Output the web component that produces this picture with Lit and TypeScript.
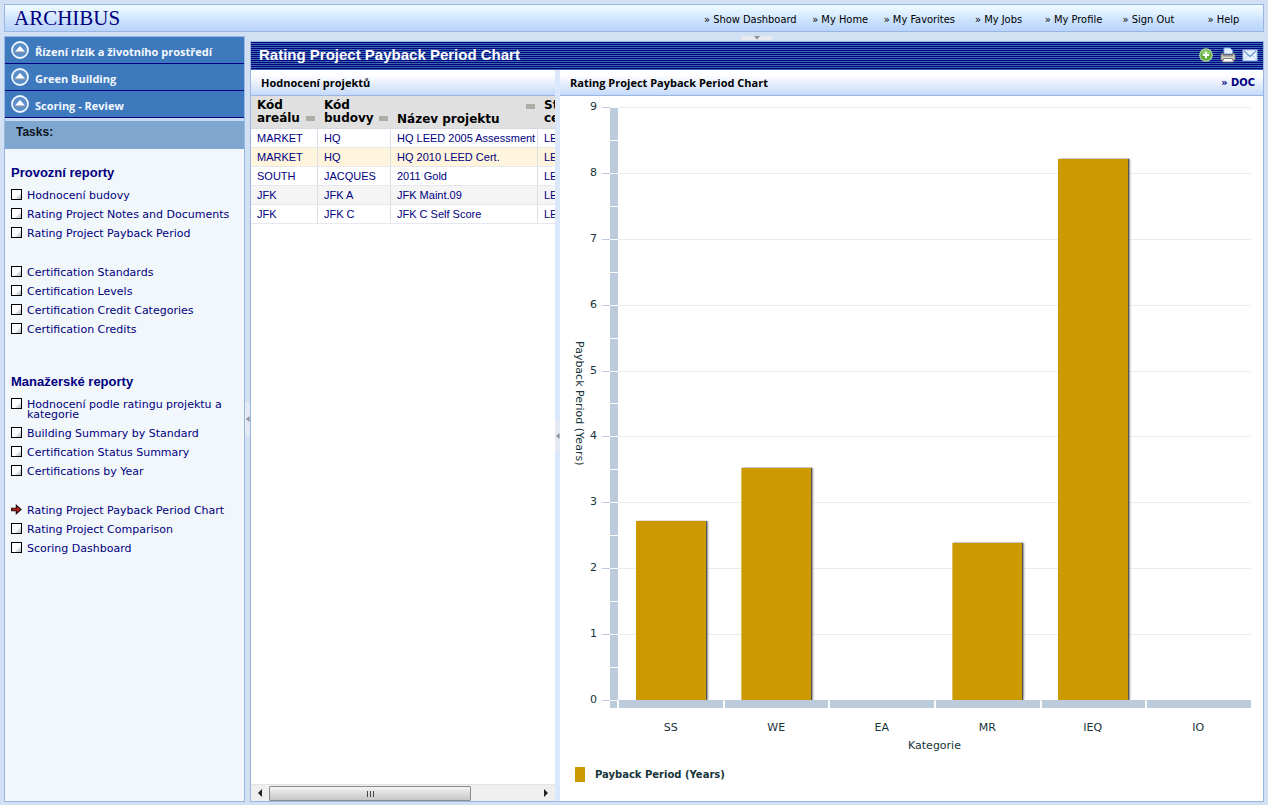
import { LitElement, html, svg, css, nothing } from "lit";
import { customElement } from "lit/decorators.js";
import { classMap } from "lit/directives/class-map.js";
import { styleMap } from "lit/directives/style-map.js";

interface Task {
  label: string;
  active?: boolean;
}

const NAV = ["Show Dashboard", "My Home", "My Favorites", "My Jobs", "My Profile", "Sign Out", "Help"];
const CRUMBS = ["Řízení rizik a životního prostředí", "Green Building", "Scoring - Review"];

const SECTIONS: { title: string; groups: Task[][] }[] = [
  {
    title: "Provozní reporty",
    groups: [
      [
        { label: "Hodnocení budovy" },
        { label: "Rating Project Notes and Documents" },
        { label: "Rating Project Payback Period" },
      ],
      [
        { label: "Certification Standards" },
        { label: "Certification Levels" },
        { label: "Certification Credit Categories" },
        { label: "Certification Credits" },
      ],
    ],
  },
  {
    title: "Manažerské reporty",
    groups: [
      [
        { label: "Hodnocení podle ratingu projektu a kategorie" },
        { label: "Building Summary by Standard" },
        { label: "Certification Status Summary" },
        { label: "Certifications by Year" },
      ],
      [
        { label: "Rating Project Payback Period Chart", active: true },
        { label: "Rating Project Comparison" },
        { label: "Scoring Dashboard" },
      ],
    ],
  },
];

const ROWS = [
  ["MARKET", "HQ", "HQ LEED 2005 Assessment", "LEED"],
  ["MARKET", "HQ", "HQ 2010 LEED Cert.", "LEED"],
  ["SOUTH", "JACQUES", "2011 Gold", "LEED"],
  ["JFK", "JFK A", "JFK Maint.09", "LEED"],
  ["JFK", "JFK C", "JFK C Self Score", "LEED"],
];
const SELECTED_ROW = 1;

const MAX = 9;
const DATA = [
  { name: "SS", value: 2.71 },
  { name: "WE", value: 3.52 },
  { name: "EA", value: 0 },
  { name: "MR", value: 2.39 },
  { name: "IEQ", value: 8.21 },
  { name: "IO", value: 0 },
];
const STEPS = Array.from({ length: MAX + 1 }, (_, i) => MAX - i);

const boxIcon = svg`<svg class="bullet" viewBox="0 0 11 11" width="11" height="11" aria-hidden="true">
  <rect x=".5" y=".5" width="10" height="10" fill="#fff" stroke="#000"/>
  <path d="M10 4v6H4z" fill="#dcdee3"/><path d="M10 6.500V10H6.500z" fill="#c3c6cc"/></svg>`;
const arrowIcon = svg`<svg class="bullet" viewBox="0 0 11 11" width="11" height="11" aria-hidden="true">
  <path d="M.7 4.200h4.600V1.300L10 5.500 5.300 9.700V6.800H.7z" fill="#c8231c" stroke="#1b0505" stroke-width="1.100"/></svg>`;
const upIcon = svg`<svg viewBox="0 0 18 18" width="18" height="18" aria-hidden="true">
  <circle cx="9" cy="9" r="8" fill="#5b8fca" stroke="#eef6ff" stroke-width="1.800"/>
  <path d="M9 5l5 5.500H4z" fill="#fff"/><path d="M4 11.500h10" stroke="#8b8fa8"/></svg>`;
const addIcon = svg`<svg viewBox="0 0 16 16" width="16" height="16" aria-hidden="true">
  <circle cx="8" cy="8" r="6.200" fill="#5fae3c" stroke="#b9dda6" stroke-width="1.200"/>
  <path d="M3.500 7a4.600 4.600 0 0 1 9 0z" fill="#8fcf70"/>
  <path d="M8 4.800v6.400M4.800 8h6.400" stroke="#fff" stroke-width="2"/></svg>`;
const printIcon = svg`<svg viewBox="0 0 16 16" width="16" height="16" aria-hidden="true">
  <path d="M4 7V1h6l2.500 2.500V7z" fill="#e4f0ff" stroke="#7fa8dc"/>
  <path d="M1 8.500Q1 6 3 6v2h10V6q2 0 2 2.500V13H1z" fill="#d9d9d4" stroke="#77756f"/>
  <path d="M2.500 9h11" stroke="#8a8378"/><path d="M3.500 11.500h9l1 3.500h-11z" fill="#fff" stroke="#7e7e7e"/></svg>`;
const mailIcon = svg`<svg viewBox="0 0 16 16" width="16" height="16" aria-hidden="true">
  <rect x="1" y="3" width="14" height="10.500" fill="#eaf3ff" stroke="#a9c8ee"/>
  <path d="M1.500 13l4.700-5M14.500 13L9.800 8" stroke="#b7cfee" fill="none"/>
  <path d="M2 4l6 5.500L14 4" stroke="#6f9bd2" fill="none" stroke-width="1.300"/></svg>`;
const leftTri = svg`<svg viewBox="0 0 4 8" width="4" height="8" aria-hidden="true"><path d="M3.500 1v6L0 4z" fill="#8a9099"/></svg>`;
const downTri = svg`<svg viewBox="0 0 8 4" width="8" height="4" aria-hidden="true"><path d="M1 0h6L4 3.500z" fill="#8a9099"/></svg>`;

@customElement("app-root")
export class AppRoot extends LitElement {
  static styles = css`
    :host {
      display: flex;
      flex-direction: column;
      gap: 4px;
      box-sizing: border-box;
      min-height: 100vh;
      padding: 4px 4px 3px;
      background: #d2e0f3;
      color: #000;
      --navy: #000080;
      --line: #99b6e3;
      --verdana: "DejaVu Sans", sans-serif;
      --tahoma: "DejaVu Sans Condensed", "DejaVu Sans", sans-serif;
      --arial: "Liberation Sans", sans-serif;
      --label: "Open Sans", sans-serif;
      font: 11px/14px var(--verdana);
    }
    * { box-sizing: border-box; }
    a { color: inherit; text-decoration: none; }
    button { border: 0; padding: 0; margin: 0; background: none; font: inherit; color: inherit; display: block; }
    svg { display: block; flex: none; }
    ul { list-style: none; margin: 0; padding: 0; }
    h1, h2, h3 { margin: 0; }

    .top {
      display: flex;
      align-items: center;
      justify-content: space-between;
      height: 28px;
      padding: 0 2px 0 9px;
      border: 1px solid var(--line);
      background: linear-gradient(#f2fcff 0, #d9ecff 40%, #cbe1fd 60%, #b9d4fb 100%);
    }
    .brand { font: 21px/24px "Liberation Serif", serif; color: var(--navy); }
    .nav { display: flex; padding-top: 3px; font: 11px/14px var(--tahoma); }
    .nav a { min-width: 75px; padding: 0 6px; text-align: center; white-space: nowrap; }

    .body { display: flex; flex: 1; }
    .side { width: 241px; flex: none; border: 1px solid var(--line); background: #f2f7fb; }
    .crumb {
      display: flex;
      align-items: center;
      gap: 6px;
      height: 27px;
      padding-left: 6px;
      border-bottom: 1px solid var(--navy);
      background: #3e78bd;
      color: #f2f9ff;
      font: 700 11px/16px var(--label);
    }
    .crumb span { padding-top: 3px; }
    .tasks {
      height: 31px;
      padding: 4px 11px;
      border-top: 3px solid #c5dbf3;
      background: #7fa6cf;
      color: #0b1420;
      font: 700 12px/14px var(--arial);
    }
    .section { padding: 16px 6px 19px; color: var(--navy); }
    .section + .section { padding-top: 16px; }
    .section h2 { font: 700 13px/16px var(--arial); padding-bottom: 5px; }
    .group + .group { padding-top: 20px; }
    .group a { display: flex; gap: 5px; padding: 5px 0 4px; line-height: 10px; }
    .bullet { margin-top: -2px; margin-bottom: 1px; }

    .split { width: 5px; flex: none; display: flex; align-items: center; background: #dbe8fb; }
    .split button { width: 5px; height: 34px; display: flex; align-items: center; justify-content: center; background: #e4e9f3; border-radius: 2px; }
    .outer { background: #d2e0f3; }

    .main { flex: 1; min-width: 0; display: flex; flex-direction: column; }
    .strip { height: 5px; display: flex; justify-content: center; }
    .strip button { width: 32px; height: 4px; display: flex; justify-content: center; background: #e6e9ee; border-radius: 2px; }
    .frame { flex: 1; display: flex; flex-direction: column; border: 1px solid var(--line); background: #fff; }
    .title {
      display: flex;
      align-items: center;
      justify-content: space-between;
      height: 28px;
      padding: 0 5px 2px 8px;
      background: repeating-linear-gradient(#000080 0 1px, #3a68ae 1px 2px);
      color: #fff;
    }
    .title h1 { font: 700 15px/20px var(--arial); }
    .tools { display: flex; gap: 6px; }
    .panels { flex: 1; display: flex; min-height: 0; }
    .head {
      display: flex;
      align-items: center;
      justify-content: space-between;
      height: 26px;
      padding: 0 8px 0 10px;
      border-bottom: 1px solid var(--line);
      background: linear-gradient(#fff 20%, #dfe9fb 65%, #c5dafb);
      font: 700 11px/16px var(--label);
    }
    .head h2 { font: inherit; }
    .doc { color: var(--navy); font-family: var(--tahoma); }

    .list { width: 304px; flex: none; display: flex; flex-direction: column; overflow: hidden; }
    .scroll { flex: 1; overflow: hidden; }
    table { table-layout: fixed; width: 387px; border-spacing: 0; }
    .c1 { width: 67px; }
    .c2 { width: 73px; }
    .c3 { width: 147px; }
    .c4 { width: 100px; }
    th, td { padding: 0 0 0 6px; text-align: left; border-right: 1px solid #dcdfe6; white-space: nowrap; }
    th { height: 33px; background: #e0e0e0; border-bottom: 1px solid #d5d8de; font: 700 12px/13px var(--verdana); vertical-align: middle; }
    td { height: 19px; border-bottom: 1px solid #e6e8ee; font: 11px/16px var(--arial); color: var(--navy); }
    .alt td { background: #f5f5f5; }
    .sel td { background: #fff5dc; }
    .th { display: flex; align-items: flex-end; justify-content: space-between; padding-right: 2px; }
    .stack { flex-direction: column-reverse; align-items: stretch; padding-top: 6px; }
    .stack .sort { align-self: flex-end; }
    .sort { width: 9px; height: 5px; margin-bottom: 4px; background: #aeada6; }
    .bar { display: flex; height: 17px; background: #efefef; border-top: 1px solid #e3e3e3; }
    .bar button { width: 18px; display: flex; align-items: center; justify-content: center; }
    .track { flex: 1; padding-top: 1px; }
    .thumb {
      width: 202px;
      height: 15px;
      display: flex;
      align-items: center;
      justify-content: center;
      gap: 2px;
      border: 1px solid #8b8b8b;
      border-radius: 1px;
      background: linear-gradient(#f4f4f4, #dcdcdc 50%, #c6c6c6);
    }
    .thumb i { width: 1px; height: 6px; background: #444; }

    .chart { flex: 1; min-width: 0; display: flex; flex-direction: column; }
    .graph {
      flex: 1;
      display: grid;
      grid-template-columns: 14px 11px 13px 8px 1fr;
      grid-template-rows: 1fr 8px;
      padding: 11px 12px 0;
      color: #16343a;
    }
    .ytitle { writing-mode: vertical-rl; text-align: center; line-height: 14px; }
    .scale { display: flex; flex-direction: column; justify-content: space-between; }
    .nums span { height: 0; display: flex; align-items: center; justify-content: flex-end; }
    .ticks { grid-row: 1; grid-column: 3; padding-left: 5px; }
    .ticks i { height: 1px; background: #bccbdb; margin-bottom: -1px; }
    .axis { grid-column: 4; display: flex; flex-direction: column; background: #bccbdb; }
    .axis i { flex: 1; border-top: 1px solid #fff; }
    .corner { grid-row: 2; grid-column: 4; margin-right: 1px; border-top: 1px solid #fff; background: #bccbdb; }
    .lines { grid-row: 1; grid-column: 5; }
    .lines i { height: 1px; background: #ebebeb; margin-bottom: -1px; }
    .bars { grid-row: 1; grid-column: 5; display: flex; align-items: flex-end; z-index: 1; }
    .slot { flex: 1; height: 100%; display: flex; align-items: flex-end; justify-content: center; }
    .col { width: 66%; background: #cc9900; box-shadow: 1px 0 1px #555, 2px 0 2px #999; clip-path: inset(-1px -4px 0 0); }
    .cats { grid-row: 2; grid-column: 5; display: flex; gap: 2px; padding-left: 1px; }
    .cats i { flex: 1; background: #bccbdb; }
    .under { padding: 13px 12px 0 58px; color: #16343a; text-align: center; }
    .names { display: flex; }
    .names span { flex: 1; }
    .xtitle { padding-top: 4px; }
    .legend { display: flex; align-items: center; gap: 10px; padding: 14px 15px 19px; color: #16343a; font: 700 10px/15px var(--verdana); }
    .legend i { width: 10px; height: 15px; background: #cc9900; }
  `;

  private sectionView(s: (typeof SECTIONS)[number]) {
    return html`<section class="section">
      <h2>${s.title}</h2>
      ${s.groups.map(
        (g) => html`<ul class="group">
          ${g.map(
            (t) => html`<li>
              <a href="#" aria-current=${t.active ? "page" : nothing}>${t.active ? arrowIcon : boxIcon}<span>${t.label}</span></a>
            </li>`
          )}
        </ul>`
      )}
    </section>`;
  }

  private tableView() {
    const sort = html`<button class="sort" aria-label="Filter"></button>`;
    return html`<table>
      <colgroup><col class="c1" /><col class="c2" /><col class="c3" /><col class="c4" /></colgroup>
      <thead>
        <tr>
          <th scope="col"><div class="th"><span>Kód<br />areálu</span>${sort}</div></th>
          <th scope="col"><div class="th"><span>Kód<br />budovy</span>${sort}</div></th>
          <th scope="col"><div class="th stack"><span>Název projektu</span>${sort}</div></th>
          <th scope="col"><div class="th"><span>Standard<br />certifikace</span></div></th>
        </tr>
      </thead>
      <tbody>
        ${ROWS.map(
          (r, i) => html`<tr class=${classMap({ sel: i === SELECTED_ROW, alt: i % 2 === 1 && i !== SELECTED_ROW })}>
            ${r.map((c) => html`<td>${c}</td>`)}
          </tr>`
        )}
      </tbody>
    </table>`;
  }

  private chartView() {
    return html`<div class="graph">
        <div class="ytitle">Payback Period (Years)</div>
        <div class="scale nums">${STEPS.map((n) => html`<span>${n}</span>`)}</div>
        <div class="scale ticks">${STEPS.map(() => html`<i></i>`)}</div>
        <div class="axis">${Array.from({ length: MAX * 2 }, () => html`<i></i>`)}</div>
        <div class="corner"></div>
        <div class="scale lines">${STEPS.map(() => html`<i></i>`)}</div>
        <div class="bars">
          ${DATA.map(
            (d) => html`<div class="slot">
              ${d.value ? html`<div class="col" style=${styleMap({ height: `${(d.value / MAX) * 100}%` })}></div>` : nothing}
            </div>`
          )}
        </div>
        <div class="cats">${DATA.map(() => html`<i></i>`)}</div>
      </div>
      <div class="under">
        <div class="names">${DATA.map((d) => html`<span>${d.name}</span>`)}</div>
        <div class="xtitle">Kategorie</div>
      </div>
      <div class="legend"><i></i>Payback Period (Years)</div>`;
  }

  render() {
    return html`
      <header class="top">
        <div class="brand">ARCHIBUS</div>
        <nav class="nav">${NAV.map((n) => html`<a href="#">» ${n}</a>`)}</nav>
      </header>
      <div class="body">
        <aside class="side">
          ${CRUMBS.map((c) => html`<a class="crumb" href="#">${upIcon}<span>${c}</span></a>`)}
          <div class="tasks">Tasks:</div>
          ${SECTIONS.map((s) => this.sectionView(s))}
        </aside>
        <div class="split outer"><button aria-label="Collapse tasks">${leftTri}</button></div>
        <main class="main">
          <div class="strip"><button aria-label="Collapse header">${downTri}</button></div>
          <div class="frame">
            <div class="title">
              <h1>Rating Project Payback Period Chart</h1>
              <div class="tools">
                <button aria-label="Add">${addIcon}</button>
                <button aria-label="Print">${printIcon}</button>
                <button aria-label="Mail">${mailIcon}</button>
              </div>
            </div>
            <div class="panels">
              <section class="list">
                <div class="head"><h2>Hodnocení projektů</h2></div>
                <div class="scroll">${this.tableView()}</div>
                <div class="bar">
                  <button aria-label="Scroll left"><svg viewBox="0 0 4 8" width="4" height="8"><path d="M4 0v8L0 4z" fill="#222" /></svg></button>
                  <div class="track"><div class="thumb"><i></i><i></i><i></i></div></div>
                  <button aria-label="Scroll right"><svg viewBox="0 0 4 8" width="4" height="8"><path d="M0 0v8l4-4z" fill="#222" /></svg></button>
                </div>
              </section>
              <div class="split"><button aria-label="Collapse list">${leftTri}</button></div>
              <section class="chart">
                <div class="head"><h2>Rating Project Payback Period Chart</h2><a class="doc" href="#">» DOC</a></div>
                ${this.chartView()}
              </section>
            </div>
          </div>
        </main>
      </div>
    `;
  }
}
